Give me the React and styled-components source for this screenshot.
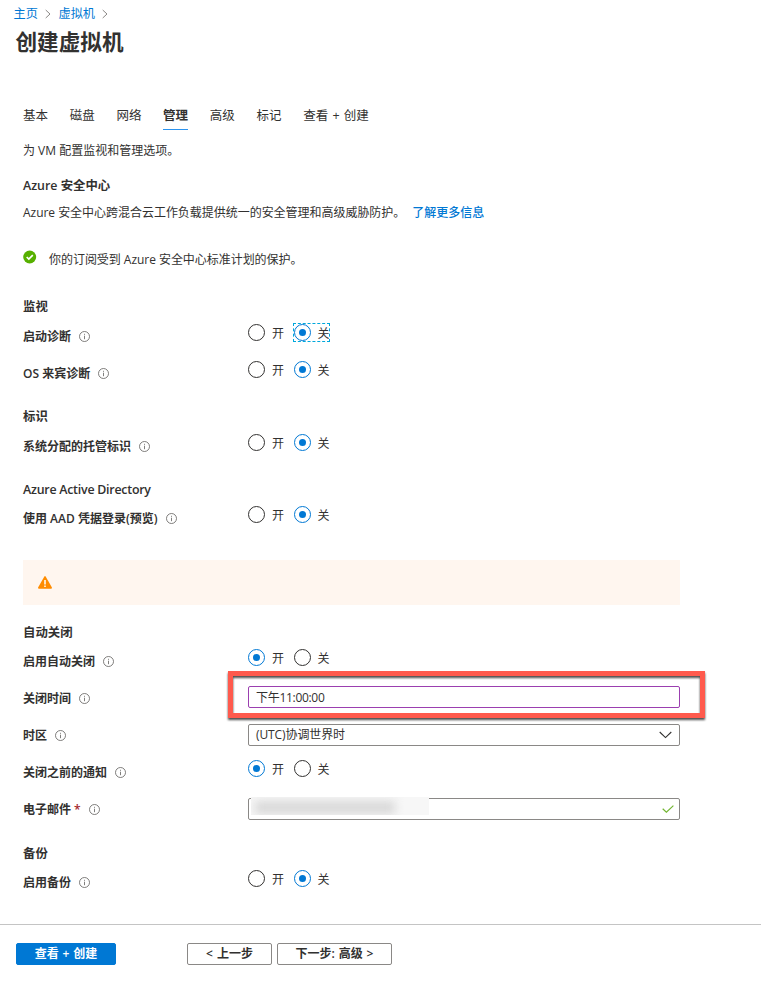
import React from "react";
import styled, { createGlobalStyle } from "styled-components";

const Global = createGlobalStyle`
  * { box-sizing: border-box; }
  body {
    margin: 0;
    background: #fff;
    color: #323130;
    font: 12px/20px "Open Sans", "Noto Sans CJK SC", sans-serif;
  }
`;

const Page = styled.div`
  width: 761px;
  height: 983px;
  display: flex;
  flex-direction: column;
  overflow: hidden;
  white-space: nowrap;
`;

const Breadcrumb = styled.nav`
  display: flex;
  align-items: center;
  height: 20px;
  margin: 4px 0 0 13.5px;
  gap: 7.3px;
  font-size: 12.2px;
`;

const Link = styled.a`
  color: #0078d4;
  font-weight: ${(p) => (p.$strong ? 500 : 400)};
`;

const Title = styled.h1`
  margin: 0 0 0 15.5px;
  height: 36px;
  font-size: 21.6px;
  line-height: 36px;
  font-weight: 700;
`;

const Tabs = styled.div`
  display: flex;
  gap: 21.7px;
  margin: 42px 0 0 23px;
  height: 28px;
`;

const Tab = styled.div`
  height: 28px;
  line-height: 27px;
  font-size: 12.5px;
  font-weight: ${(p) => (p.$active ? 700 : 400)};
  border-bottom: 1px solid ${(p) => (p.$active ? "#2b93ee" : "transparent")};
  word-spacing: ${(p) => p.$spread || 0}px;
`;

const Content = styled.main`
  padding-left: 23px;
`;

const Line = styled.p`
  margin: ${(p) => p.$top}px 0 0;
  height: 20px;
  padding-top: 2px;
  display: flex;
  align-items: center;
  gap: ${(p) => p.$gap || 0}px;
  letter-spacing: ${(p) => p.$tracking || 0}px;

  svg {
    margin-bottom: 7px;
  }
`;

const Heading = styled.h2`
  margin: ${(p) => p.$top}px 0 0;
  height: 20px;
  line-height: ${(p) => p.$line || 22}px;
  font-size: 12.4px;
  font-weight: 600;
  letter-spacing: ${(p) => p.$tracking || 0}px;
`;

const Row = styled.div`
  display: grid;
  grid-template-columns: 225px 432px;
  align-items: center;
  height: 37px;
`;

const Label = styled.div`
  display: flex;
  align-items: center;
  padding-top: 2px;
  font-weight: 600;

  svg {
    margin-left: 8px;
  }
`;

const Required = styled.span`
  color: #a4262c;
  margin: 0 0 0 3px;
`;

const Radios = styled.div`
  display: flex;
  align-items: center;
  height: 20px;
  margin-top: -6px;
`;

const Option = styled.div`
  display: flex;
  align-items: center;
  width: ${(p) => (p.$last ? 37 : 45)}px;
  height: 19px;
  padding: 2px 0 0 ${(p) => (p.$last ? 1 : 0)}px;
  gap: ${(p) => (p.$last ? 6.5 : 7)}px;
  ${(p) => p.$focus && "outline: 1px dashed #00a8dc; outline-offset: -1px;"}
`;

const Circle = styled.span`
  flex: none;
  display: grid;
  place-items: center;
  width: 17px;
  height: 17px;
  margin-bottom: 2px;
  border: 1px solid ${(p) => (p.$on ? "#0078d4" : "#323130")};
  border-radius: 50%;

  &::after {
    content: "";
    width: 7px;
    height: 7px;
    border-radius: 50%;
    background: ${(p) => (p.$on ? "#0078d4" : "transparent")};
  }
`;

const Field = styled.div`
  position: relative;
  display: flex;
  align-items: center;
  justify-content: space-between;
  height: 22px;
  margin-top: ${(p) => (p.$active ? -2 : 0)}px;
  padding: ${(p) => (p.$active ? 2 : 1)}px ${(p) => p.$right || 7}px 0 7px;
  border: 1px solid ${(p) => (p.$active ? "#9b3fb0" : "#8a8886")};
  border-radius: 2px;
  letter-spacing: ${(p) => p.$tracking || 0}px;
`;

const Callout = styled.div`
  position: absolute;
  left: -21px;
  top: -16px;
  width: 477px;
  height: 47px;
  border: 5px solid #ff5a4d;
  filter: drop-shadow(0 2px 1px rgba(0, 0, 0, 0.7));
  pointer-events: none;
`;

const Redaction = styled.div`
  position: absolute;
  left: 2px;
  top: -2px;
  width: 178px;
  height: 18px;
  overflow: hidden;
  background: #f7f7f7;

  &::before {
    content: "";
    position: absolute;
    left: 4px;
    top: 4px;
    width: 140px;
    height: 13px;
    background: #d8d8d8;
    filter: blur(5px);
  }
`;

const Banner = styled.div`
  display: flex;
  align-items: center;
  width: 657px;
  height: 45px;
  margin-top: 24px;
  padding-left: 15px;
  background: #fff6ef;
`;

const Footer = styled.footer`
  display: flex;
  margin-top: 24px;
  padding: 18px 0 0 16px;
  border-top: 1px solid #c4c4c4;
`;

const Button = styled.button`
  width: ${(p) => p.$width}px;
  height: 22px;
  margin: 0 ${(p) => p.$after || 0}px 0 0;
  padding: 0 0 1px;
  font: 600 12px/18px "Open Sans", "Noto Sans CJK SC", sans-serif;
  word-spacing: 0.8px;
  color: ${(p) => (p.$primary ? "#fff" : "#323130")};
  background: ${(p) => (p.$primary ? "#0078d4" : "#fff")};
  border: 1px solid ${(p) => (p.$primary ? "#0078d4" : "#8a8886")};
  border-radius: 2px;
`;

const Chevron = () => (
  <svg width="6" height="10" viewBox="0 0 6 10" fill="none" stroke="#8a8886">
    <path d="M.7 1 5 5 .7 9" />
  </svg>
);

const Info = () => (
  <svg width="11" height="11" viewBox="0 0 11 11" fill="none" stroke="#605e5c" strokeWidth=".8">
    <circle cx="5.5" cy="5.5" r="5" />
    <path d="M5.5 4.7v3.5M5.5 2.8v1" />
  </svg>
);

const Success = () => (
  <svg width="14" height="14" viewBox="0 0 14 14">
    <circle cx="6.7" cy="7" r="6.5" fill="#57b000" />
    <path d="m3.7 7 2.1 2.1 4-4" fill="none" stroke="#fff" strokeWidth="1.7" />
  </svg>
);

const Warning = () => (
  <svg width="14" height="13" viewBox="0 0 14 13">
    <path d="M6.2.7q.8-1.2 1.6 0l6 10.6q.5 1.4-.8 1.4H1q-1.3 0-.8-1.4z" fill="#ff8c00" />
    <path d="M7 4v4.4M7 9.5v1.4" stroke="#fff" strokeWidth="1.5" />
  </svg>
);

const Down = () => (
  <svg width="13" height="8" viewBox="0 0 13 8" fill="none" stroke="#323130" strokeWidth="1.1">
    <path d="m.7 1 5.8 5.6L12.3 1" />
  </svg>
);

const Valid = () => (
  <svg width="12" height="8" viewBox="0 0 12 8" fill="none" stroke="#73b532" strokeWidth="1.2">
    <path d="m.7 3.7 3.7 3.5L11.4.6" />
  </svg>
);

function Setting({ label, required, children }) {
  return (
    <Row>
      <Label>
        {label}
        {required && <Required>*</Required>}
        <Info />
      </Label>
      {children}
    </Row>
  );
}

function Toggle({ on, focus }) {
  return (
    <Radios>
      <Option><Circle $on={on} />开</Option>
      <Option $last $focus={focus}><Circle $on={!on} />关</Option>
    </Radios>
  );
}

export default function App() {
  return (
    <Page>
      <Global />
      <Breadcrumb>
        <Link>主页</Link><Chevron /><Link>虚拟机</Link><Chevron />
      </Breadcrumb>
      <Title>创建虚拟机</Title>
      <Tabs>
        <Tab>基本</Tab><Tab>磁盘</Tab><Tab>网络</Tab><Tab $active>管理</Tab>
        <Tab>高级</Tab><Tab>标记</Tab><Tab $spread={1}>查看 + 创建</Tab>
      </Tabs>
      <Content>
        <Line $top={10}>为 VM 配置监视和管理选项。</Line>
        <Heading $top={16} $line={20}>Azure 安全中心</Heading>
        <Line $top={6} $gap={7} $tracking={-0.03}>
          Azure 安全中心跨混合云工作负载提供统一的安全管理和高级威胁防护。
          <Link $strong>了解更多信息</Link>
        </Line>
        <Line $top={27} $gap={12} $tracking={-0.04}>
          <Success />你的订阅受到 Azure 安全中心标准计划的保护。
        </Line>

        <Heading $top={28} $line={20}>监视</Heading>
        <Setting label="启动诊断"><Toggle focus /></Setting>
        <Setting label="OS 来宾诊断"><Toggle /></Setting>

        <Heading $top={16} $line={20}>标识</Heading>
        <Setting label="系统分配的托管标识"><Toggle /></Setting>

        <Heading $top={15} $tracking={-0.24}>Azure Active Directory</Heading>
        <Setting label="使用 AAD 凭据登录(预览)"><Toggle /></Setting>

        <Banner><Warning /></Banner>

        <Heading $top={17}>自动关闭</Heading>
        <Setting label="启用自动关闭"><Toggle on /></Setting>
        <Setting label="关闭时间">
          <Field $active $tracking={-0.3}>下午11:00:00<Callout /></Field>
        </Setting>
        <Setting label="时区">
          <Field $tracking={-0.1}>(UTC)协调世界时<Down /></Field>
        </Setting>
        <Setting label="关闭之前的通知"><Toggle on /></Setting>
        <Setting label="电子邮件" required>
          <Field $right={5}><Redaction /><span /><Valid /></Field>
        </Setting>

        <Heading $top={16}>备份</Heading>
        <Setting label="启用备份"><Toggle /></Setting>
      </Content>
      <Footer>
        <Button $primary $width={100} $after={71}>查看 + 创建</Button>
        <Button $width={85} $after={5}>&lt; 上一步</Button>
        <Button $width={115}>下一步: 高级 &gt;</Button>
      </Footer>
    </Page>
  );
}
